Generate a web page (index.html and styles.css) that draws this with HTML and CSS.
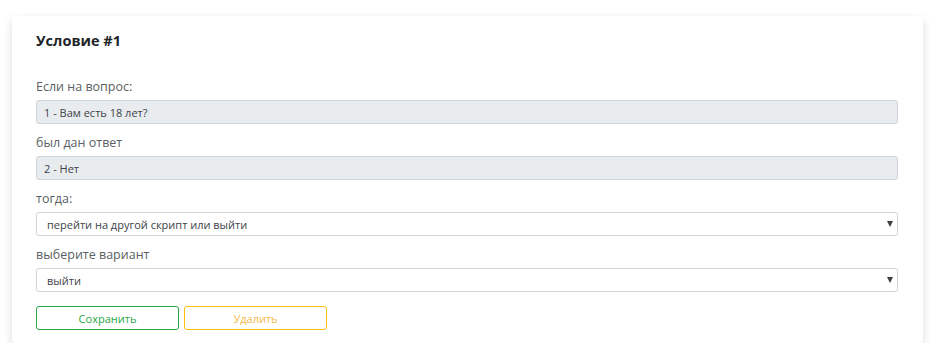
FILE: index.html
```html
<!DOCTYPE html>
<html lang="ru">
<head>
    <meta charset="UTF-8">
    <meta name="viewport" content="width=device-width, initial-scale=1.0">
    <title>Условие</title>
    <link rel="stylesheet" href="styles.css">
</head>
<body>
    <!-- Карточка условия -->
    <div class="card">
        <h2 class="card-title">Условие #1</h2>

        <div class="form-group">
            <label>Если на вопрос:</label>
            <input type="text" class="form-control" value="1 - Вам есть 18 лет?" readonly>
        </div>

        <div class="form-group">
            <label>был дан ответ</label>
            <input type="text" class="form-control" value="2 - Нет" readonly>
        </div>

        <div class="form-group">
            <label>тогда:</label>
            <div class="select-wrap">
                <select class="form-select">
                    <option>перейти на другой скрипт или выйти</option>
                </select>
            </div>
        </div>

        <div class="form-group">
            <label>выберите вариант</label>
            <div class="select-wrap">
                <select class="form-select">
                    <option>выйти</option>
                </select>
            </div>
        </div>

        <div class="buttons">
            <button class="btn btn-save">Сохранить</button>
            <button class="btn btn-delete">Удалить</button>
        </div>
    </div>
</body>
</html>
```

FILE: styles.css
```css
body {
    font-family: "Open Sans", Arial, sans-serif;
    margin: 0;
    padding: 16px 17px 0 12px;
    background-color: #fff;
}

.card {
    background: #fff;
    padding: 14px 25px 13px 24px;
    border-radius: 3px;
    box-shadow: 0 4px 10px rgba(0, 0, 0, 0.14);
}

.card-title {
    margin: 0 0 25px 0;
    font-size: 14.5px;
    line-height: 22px;
    font-weight: 700;
    color: #212529;
}

.form-group {
    margin-bottom: 9px;
}

.form-group label {
    display: block;
    font-size: 12.5px;
    line-height: 20px;
    color: #5a5f64;
    margin-bottom: 3px;
}

.form-control,
.form-select {
    display: block;
    box-sizing: border-box;
    width: 100%;
    height: 24px;
    margin: 0;
    font-family: "Open Sans", Arial, sans-serif;
    font-size: 11px;
    color: #3d4349;
    border: 1px solid #ced4da;
    border-radius: 3px;
    outline: none;
}

.form-control {
    padding: 0 7px;
    background: #e9ecef;
}

.form-select {
    padding: 0 20px 0 10px;
    background: #fff;
    appearance: none;
    -webkit-appearance: none;
}

.select-wrap {
    position: relative;
}

.select-wrap::after {
    content: "";
    position: absolute;
    right: 5px;
    top: 9px;
    border-left: 3px solid transparent;
    border-right: 3px solid transparent;
    border-top: 6px solid #3a3f44;
    pointer-events: none;
}

.buttons {
    display: flex;
    gap: 5px;
    margin-top: 14px;
}

.btn {
    width: 143px;
    height: 24px;
    padding: 0;
    font-family: "Open Sans", Arial, sans-serif;
    font-size: 11px;
    background: #fff;
    border-radius: 3px;
    cursor: pointer;
}

.btn-save {
    color: #28a745;
    border: 1px solid #28a745;
}

.btn-delete {
    color: #f7b946;
    border: 1px solid #ffc107;
}
```
